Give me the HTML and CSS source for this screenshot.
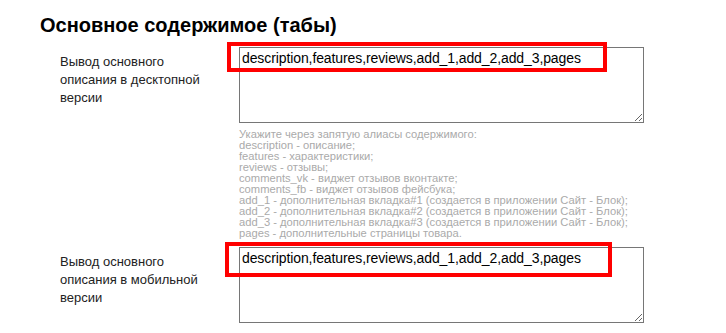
FILE: index.html
```html
<!DOCTYPE html>
<html lang="ru">
<head>
  <meta charset="UTF-8" />
  <title>Основное содержимое (табы)</title>
  <link rel="stylesheet" href="styles.css">
</head>
<body>

<div class="page">
  <h2>Основное содержимое (табы)</h2>

  <div class="row">
    <label class="row-label" for="tabs-desktop">Вывод основного описания в десктопной версии</label>
    <div class="row-field">
      <div class="field">
        <textarea id="tabs-desktop">description,features,reviews,add_1,add_2,add_3,pages</textarea>
        <span class="mark mark-desktop"></span>
      </div>
      <div class="hint">
        Укажите через запятую алиасы содержимого:<br>
        description - описание;<br>
        features - характеристики;<br>
        reviews - отзывы;<br>
        comments_vk - виджет отзывов вконтакте;<br>
        comments_fb - виджет отзывов фейсбука;<br>
        add_1 - дополнительная вкладка#1 (создается в приложении Сайт - Блок);<br>
        add_2 - дополнительная вкладка#2 (создается в приложении Сайт - Блок);<br>
        add_3 - дополнительная вкладка#3 (создается в приложении Сайт - Блок);<br>
        pages - дополнительные страницы товара.
      </div>
    </div>
  </div>

  <div class="row">
    <label class="row-label" for="tabs-mobile">Вывод основного описания в мобильной версии</label>
    <div class="row-field">
      <div class="field">
        <textarea id="tabs-mobile">description,features,reviews,add_1,add_2,add_3,pages</textarea>
        <span class="mark mark-mobile"></span>
      </div>
    </div>
  </div>
</div>

</body>
</html>
```

FILE: styles.css
```css
* { box-sizing: border-box; }

body {
  margin: 0;
  background: #fff;
  color: #222;
  font-family: 'Liberation Sans', Arial, sans-serif;
}

.page {
  padding: 14px 0 0 40px;
}

h2 {
  margin: 0 0 10px;
  font-size: 20px;
  font-weight: bold;
  line-height: 23px;
  color: #000;
}

.row {
  display: grid;
  grid-template-columns: 179px 405px;
  margin-left: 20px;
  margin-bottom: 8px;
}

.row-label {
  display: block;
  width: 152px;
  padding-top: 6px;
  font-size: 13px;
  line-height: 18px;
  color: #222;
}

.field {
  position: relative;
}

textarea {
  display: block;
  width: 405px;
  height: 76px;
  margin: 0;
  padding: 2px;
  border: 1px solid #767676;
  border-radius: 0;
  font-family: 'Liberation Sans', Arial, sans-serif;
  font-size: 14px;
  letter-spacing: -0.1px;
  color: #000;
  background: #fff;
}

.hint {
  margin-top: 6px;
  font-size: 11.2px;
  line-height: 11px;
  color: #aaa;
}

/* red annotation frames drawn over the fields */
.mark {
  position: absolute;
  border: 4px solid #f00;
  pointer-events: none;
}

.mark-desktop {
  left: -12px;
  top: -5px;
  width: 380px;
  height: 30px;
}

.mark-mobile {
  left: -14px;
  top: -5px;
  width: 387px;
  height: 35px;
}
```
